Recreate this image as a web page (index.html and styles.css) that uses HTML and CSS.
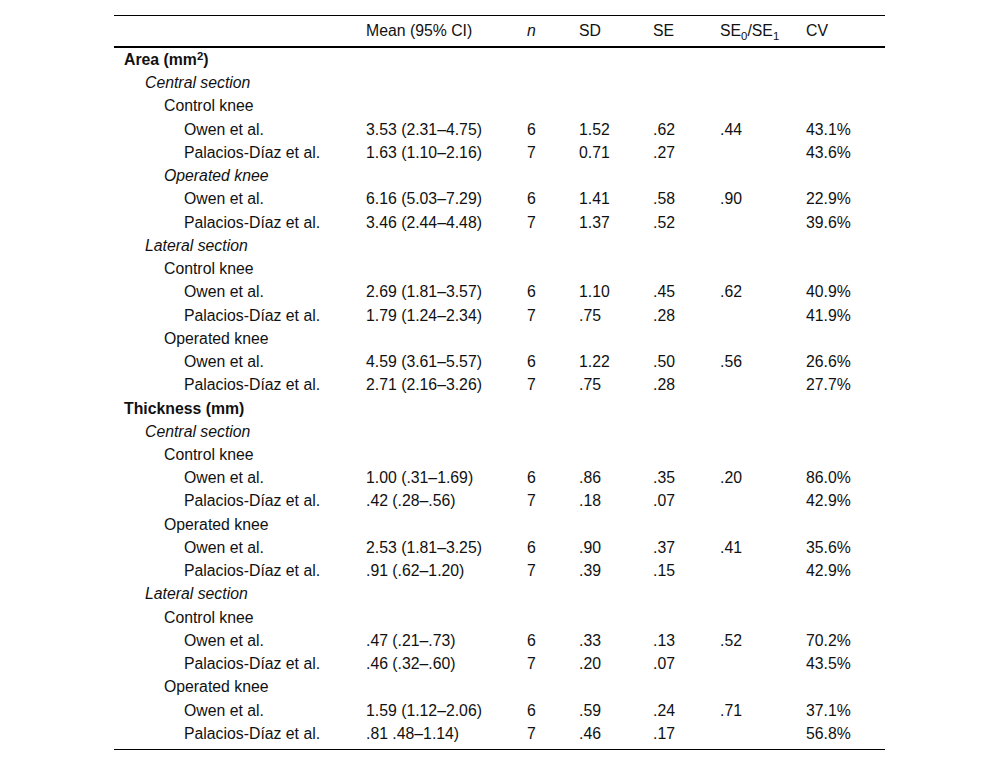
FILE: index.html
```html
<!DOCTYPE html>
<html>
<head>
<meta charset="utf-8">
<link rel="stylesheet" href="styles.css">
</head>
<body>
<div class="wrap">
<table class="data">
<colgroup>
<col class="c-label"><col class="c-mean"><col class="c-n"><col class="c-sd"><col class="c-se"><col class="c-ratio"><col class="c-cv">
</colgroup>
<thead>
<tr><th></th><th>Mean (95% CI)</th><th><i>n</i></th><th>SD</th><th>SE</th><th>SE<sub>0</sub>/SE<sub>1</sub></th><th>CV</th></tr>
</thead>
<tbody>
<tr><td class="l0"><b>Area (mm<sup>2</sup>)</b></td><td></td><td></td><td></td><td></td><td></td><td></td></tr>
<tr><td class="l1"><i>Central section</i></td><td></td><td></td><td></td><td></td><td></td><td></td></tr>
<tr><td class="l2">Control knee</td><td></td><td></td><td></td><td></td><td></td><td></td></tr>
<tr><td class="l3">Owen et al.</td><td>3.53 (2.31–4.75)</td><td>6</td><td>1.52</td><td>.62</td><td>.44</td><td>43.1%</td></tr>
<tr><td class="l3">Palacios-Díaz et al.</td><td>1.63 (1.10–2.16)</td><td>7</td><td>0.71</td><td>.27</td><td></td><td>43.6%</td></tr>
<tr><td class="l2"><i>Operated knee</i></td><td></td><td></td><td></td><td></td><td></td><td></td></tr>
<tr><td class="l3">Owen et al.</td><td>6.16 (5.03–7.29)</td><td>6</td><td>1.41</td><td>.58</td><td>.90</td><td>22.9%</td></tr>
<tr><td class="l3">Palacios-Díaz et al.</td><td>3.46 (2.44–4.48)</td><td>7</td><td>1.37</td><td>.52</td><td></td><td>39.6%</td></tr>
<tr><td class="l1"><i>Lateral section</i></td><td></td><td></td><td></td><td></td><td></td><td></td></tr>
<tr><td class="l2">Control knee</td><td></td><td></td><td></td><td></td><td></td><td></td></tr>
<tr><td class="l3">Owen et al.</td><td>2.69 (1.81–3.57)</td><td>6</td><td>1.10</td><td>.45</td><td>.62</td><td>40.9%</td></tr>
<tr><td class="l3">Palacios-Díaz et al.</td><td>1.79 (1.24–2.34)</td><td>7</td><td>.75</td><td>.28</td><td></td><td>41.9%</td></tr>
<tr><td class="l2">Operated knee</td><td></td><td></td><td></td><td></td><td></td><td></td></tr>
<tr><td class="l3">Owen et al.</td><td>4.59 (3.61–5.57)</td><td>6</td><td>1.22</td><td>.50</td><td>.56</td><td>26.6%</td></tr>
<tr><td class="l3">Palacios-Díaz et al.</td><td>2.71 (2.16–3.26)</td><td>7</td><td>.75</td><td>.28</td><td></td><td>27.7%</td></tr>
<tr><td class="l0"><b>Thickness (mm)</b></td><td></td><td></td><td></td><td></td><td></td><td></td></tr>
<tr><td class="l1"><i>Central section</i></td><td></td><td></td><td></td><td></td><td></td><td></td></tr>
<tr><td class="l2">Control knee</td><td></td><td></td><td></td><td></td><td></td><td></td></tr>
<tr><td class="l3">Owen et al.</td><td>1.00 (.31–1.69)</td><td>6</td><td>.86</td><td>.35</td><td>.20</td><td>86.0%</td></tr>
<tr><td class="l3">Palacios-Díaz et al.</td><td>.42 (.28–.56)</td><td>7</td><td>.18</td><td>.07</td><td></td><td>42.9%</td></tr>
<tr><td class="l2">Operated knee</td><td></td><td></td><td></td><td></td><td></td><td></td></tr>
<tr><td class="l3">Owen et al.</td><td>2.53 (1.81–3.25)</td><td>6</td><td>.90</td><td>.37</td><td>.41</td><td>35.6%</td></tr>
<tr><td class="l3">Palacios-Díaz et al.</td><td>.91 (.62–1.20)</td><td>7</td><td>.39</td><td>.15</td><td></td><td>42.9%</td></tr>
<tr><td class="l1"><i>Lateral section</i></td><td></td><td></td><td></td><td></td><td></td><td></td></tr>
<tr><td class="l2">Control knee</td><td></td><td></td><td></td><td></td><td></td><td></td></tr>
<tr><td class="l3">Owen et al.</td><td>.47 (.21–.73)</td><td>6</td><td>.33</td><td>.13</td><td>.52</td><td>70.2%</td></tr>
<tr><td class="l3">Palacios-Díaz et al.</td><td>.46 (.32–.60)</td><td>7</td><td>.20</td><td>.07</td><td></td><td>43.5%</td></tr>
<tr><td class="l2">Operated knee</td><td></td><td></td><td></td><td></td><td></td><td></td></tr>
<tr><td class="l3">Owen et al.</td><td>1.59 (1.12–2.06)</td><td>6</td><td>.59</td><td>.24</td><td>.71</td><td>37.1%</td></tr>
<tr class="last"><td class="l3">Palacios-Díaz et al.</td><td>.81 .48–1.14)</td><td>7</td><td>.46</td><td>.17</td><td></td><td>56.8%</td></tr>
</tbody>
</table>
</div>
</body>
</html>
```
FILE: styles.css
```css
html, body {
  margin: 0;
  padding: 0;
  background: #fff;
}
body {
  font-family: "Liberation Sans", Arial, sans-serif;
  font-size: 15.8px;
  color: #111;
}
.wrap {
  padding: 15px 0 0 114px;
}
.data {
  width: 771px;
  border-collapse: collapse;
  table-layout: fixed;
  border-top: 1px solid #000;
  border-bottom: 1px solid #000;
}
.c-label { width: 243px; }
.c-mean { width: 161px; }
.c-n { width: 52px; }
.c-sd { width: 74px; }
.c-se { width: 67px; }
.c-ratio { width: 86px; }
.c-cv { width: 88px; }
.data th {
  font-weight: normal;
  text-align: left;
  height: 30px;
  padding: 0 0 0 9px;
  border-bottom: 2px solid #000;
  vertical-align: middle;
  line-height: 18px;
}
.data td {
  height: 23.24px;
  line-height: 23.24px;
  padding: 0 0 0 9px;
  white-space: nowrap;
  vertical-align: middle;
}
.data tr.last td {
  padding-bottom: 4px;
}
sub, sup {
  font-size: 0.72em;
  line-height: 0;
  position: relative;
  vertical-align: baseline;
}
sub { bottom: -0.35em; }
sup { top: -0.45em; }
.data td.l0 { padding-left: 10px; }
.data td.l1 { padding-left: 31px; }
.data td.l2 { padding-left: 50px; }
.data td.l3 { padding-left: 70px; }
```
